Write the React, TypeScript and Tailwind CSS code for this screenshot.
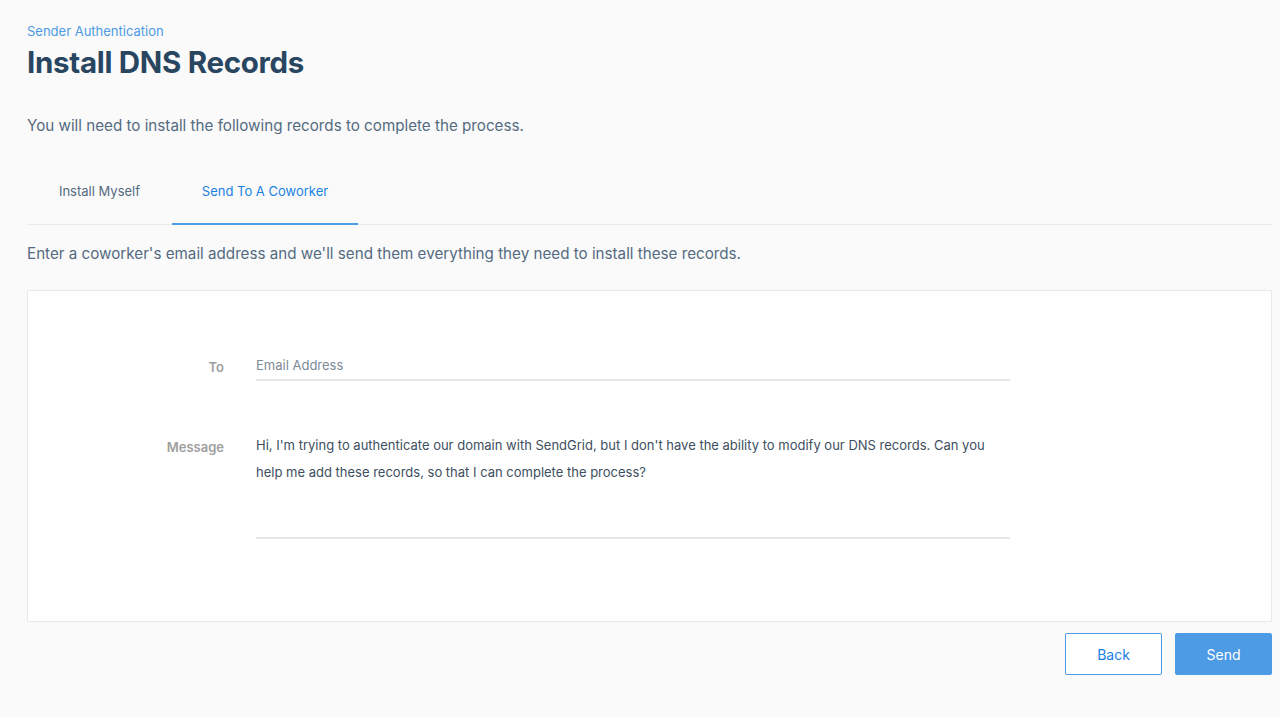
export default function App() {
  return (
    <div className="min-h-[717px] w-full bg-[#fafafa] font-['Inter',sans-serif] text-[#546b81]">
      <div className="pl-[27px] pr-[8px] pt-[22px]">
        <div className="text-[13px] leading-[18px] text-[#4d9ae5]">Sender Authentication</div>
        <h1 className="mt-[4px] text-[29.5px] font-bold leading-[36px] tracking-[-0.3px] text-[#294661]">
          Install DNS Records
        </h1>
        <p className="mt-[35px] text-[15.2px] leading-[22px]">
          You will need to install the following records to complete the process.
        </p>

        <div className="mt-[31px] flex border-b border-[#e9ecef]">
          <div className="flex h-[56px] w-[145px] items-center justify-center pb-[8px] text-[13px] text-[#546b81]">
            Install Myself
          </div>
          <div className="-mb-px flex h-[57px] w-[186px] items-center justify-center border-b-2 border-[#4d9ae5] pb-[8px] text-[13px] text-[#1a82e2]">
            Send To A Coworker
          </div>
        </div>

        <p className="mt-[18px] text-[15.2px] leading-[22px]">
          Enter a coworker's email address and we'll send them everything they need to install these records.
        </p>

        <div className="mt-[25px] h-[332px] border border-[#e9e9e9] bg-white pt-[61px]">
          <div className="flex items-start">
            <label className="w-[196px] pt-[6px] text-right text-[13px] font-semibold text-[#9e9e9e]">To</label>
            <div className="ml-[32px] w-[754px] border-b-2 border-[#e7e7e7] pb-[3px] pt-[4px] text-[13px] text-[#7c8a98]">
              Email Address
            </div>
          </div>
          <div className="mt-[51px] flex items-start">
            <label className="w-[196px] pt-[6px] text-right text-[13px] font-semibold text-[#9e9e9e]">Message</label>
            <div className="ml-[32px] h-[107px] w-[754px] border-b-2 border-[#e7e7e7] text-[13px] leading-[27px] text-[#3d4f60]">
              Hi, I'm trying to authenticate our domain with SendGrid, but I don't have the ability to modify our DNS records. Can you help me add these records, so that I can complete the process?
            </div>
          </div>
        </div>

        <div className="mt-[11px] flex justify-end gap-[13px]">
          <button className="h-[42px] w-[97px] rounded-[2px] border border-[#4d9ae5] bg-white text-[14px] text-[#1a82e2]">
            Back
          </button>
          <button className="h-[42px] w-[97px] rounded-[2px] bg-[#4d9ae5] text-[14px] text-white">
            Send
          </button>
        </div>
      </div>
    </div>
  );
}
